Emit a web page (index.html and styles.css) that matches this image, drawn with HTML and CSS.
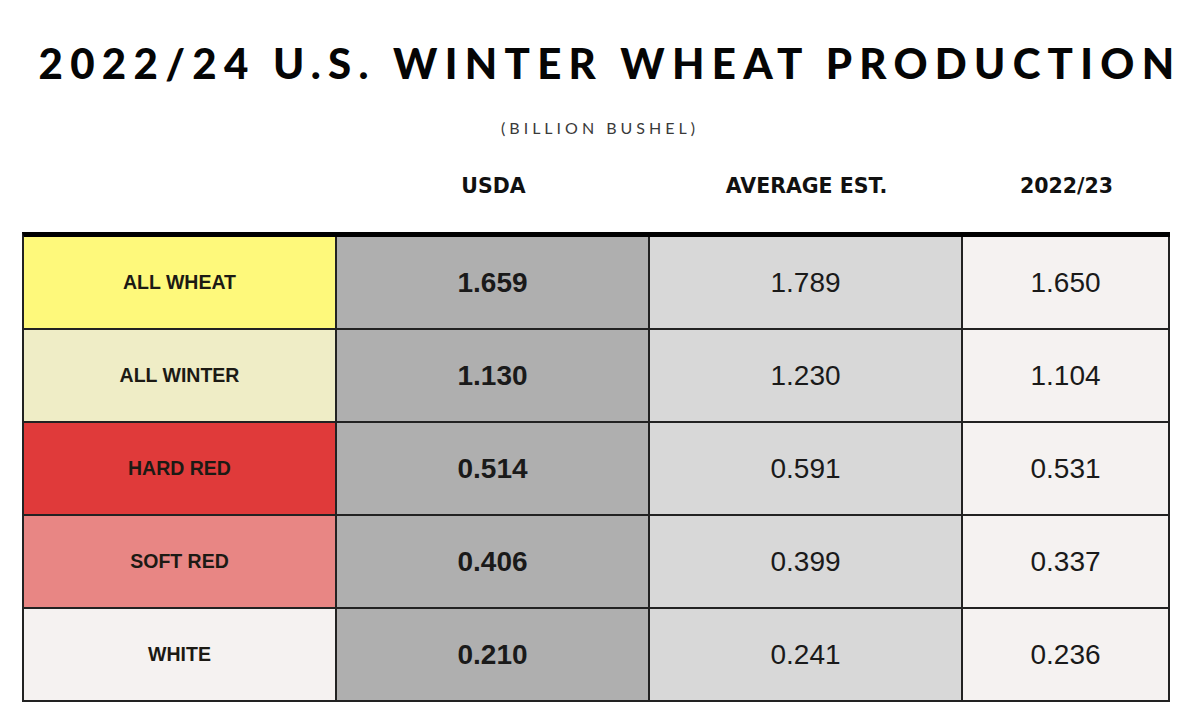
FILE: index.html
```html
<!DOCTYPE html>
<html>
<head>
<meta charset="utf-8">
<link rel="stylesheet" href="styles.css">
</head>
<body>
<div class="page">
  <h1 class="title">2022/24 U.S. WINTER WHEAT PRODUCTION</h1>
  <p class="subtitle">(BILLION BUSHEL)</p>
  <div class="heads">
    <div class="head"></div>
    <div class="head">USDA</div>
    <div class="head">AVERAGE EST.</div>
    <div class="head">2022/23</div>
  </div>
  <div class="grid">
    <div class="cell label all-wheat">ALL WHEAT</div>
    <div class="cell usda">1.659</div>
    <div class="cell avg">1.789</div>
    <div class="cell prev">1.650</div>

    <div class="cell label all-winter">ALL WINTER</div>
    <div class="cell usda">1.130</div>
    <div class="cell avg">1.230</div>
    <div class="cell prev">1.104</div>

    <div class="cell label hard-red">HARD RED</div>
    <div class="cell usda">0.514</div>
    <div class="cell avg">0.591</div>
    <div class="cell prev">0.531</div>

    <div class="cell label soft-red">SOFT RED</div>
    <div class="cell usda">0.406</div>
    <div class="cell avg">0.399</div>
    <div class="cell prev">0.337</div>

    <div class="cell label white">WHITE</div>
    <div class="cell usda">0.210</div>
    <div class="cell avg">0.241</div>
    <div class="cell prev">0.236</div>
  </div>
</div>
</body>
</html>
```
FILE: styles.css
```css
html, body {
  margin: 0;
  padding: 0;
  background: #ffffff;
}

body {
  font-family: "Liberation Sans", Arial, sans-serif;
  color: #111;
}

.page {
  width: 1200px;
  height: 718px;
  overflow: hidden;
}

.title {
  margin: 0;
  padding: 38px 0 0 20px;
  height: 50px;
  line-height: 50px;
  font-family: Lato, "Liberation Sans", sans-serif;
  font-weight: 900;
  font-size: 42px;
  letter-spacing: 7.3px;
  text-align: center;
  color: #050505;
  white-space: nowrap;
}

.subtitle {
  margin: 28px 0 0 0;
  height: 24px;
  line-height: 24px;
  font-family: Lato, "Liberation Sans", sans-serif;
  font-weight: 400;
  font-size: 16px;
  letter-spacing: 4px;
  text-align: center;
  color: #3a3a3a;
}

.heads {
  display: grid;
  grid-template-columns: 313px 313px 313px 207px;
  margin: 31px 0 0 24px;
  height: 30px;
}

.head {
  text-align: center;
  line-height: 30px;
  font-family: "DejaVu Sans", "Liberation Sans", sans-serif;
  font-weight: 700;
  font-size: 20.5px;
  color: #111;
}

.grid {
  display: grid;
  grid-template-columns: 313px 313px 313px 207px;
  grid-auto-rows: 93px;
  width: 1146px;
  margin: 31px 0 0 22px;
  border-left: 2px solid #222;
  border-top: 5px solid #000;
}

.cell {
  box-sizing: border-box;
  display: flex;
  align-items: center;
  justify-content: center;
  border-right: 2px solid #222;
  border-bottom: 2px solid #222;
  font-size: 28px;
  color: #1a1a1a;
}

.label {
  font-weight: 700;
  font-size: 19.5px;
  color: #1c1a14;
}

.usda {
  background: #afafaf;
  font-weight: 700;
}

.avg {
  background: #d8d8d8;
}

.prev {
  background: #f5f2f1;
}

.all-wheat { background: #fef97b; }
.all-winter { background: #efedc6; }
.hard-red { background: #e03a3a; }
.soft-red { background: #e88684; }
.white { background: #f5f2f1; }
```
